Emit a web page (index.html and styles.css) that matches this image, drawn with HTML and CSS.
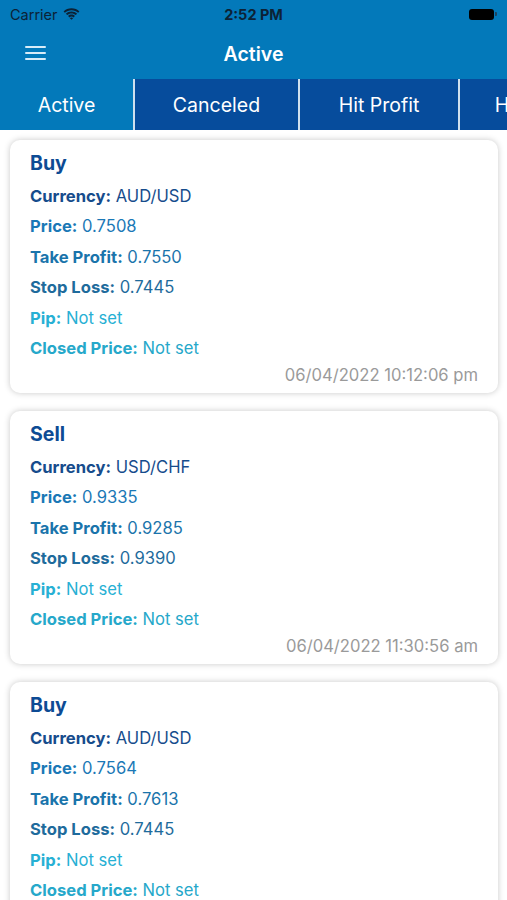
FILE: index.html
```html
<!DOCTYPE html>
<html>
<head>
<meta charset="utf-8">
<link rel="stylesheet" href="styles.css">
</head>
<body>
<div class="app">
  <header class="top">
    <div class="status">
      <div class="status-left">
        <span class="carrier">Carrier</span>
        <svg class="wifi" width="17" height="12" viewBox="0 0 17 12"><path d="M8.5 2.2c2.6 0 4.9 1 6.6 2.6l1.3-1.4C14.4 1.5 11.6.3 8.5.3S2.6 1.5.6 3.4l1.3 1.4C3.6 3.2 5.9 2.2 8.5 2.2z" fill="#0c2236"/><path d="M8.5 5.4c1.7 0 3.2.6 4.3 1.7l1.3-1.4C12.6 4.3 10.7 3.5 8.5 3.5S4.4 4.3 2.9 5.7l1.3 1.4C5.3 6 6.8 5.4 8.5 5.4z" fill="#0c2236"/><path d="M8.5 8.6c.8 0 1.5.3 2 .8l1.4-1.4c-.9-.9-2.1-1.4-3.4-1.4S6 7.1 5.1 8l1.4 1.4c.5-.5 1.2-.8 2-.8z" fill="#0c2236"/><path d="M8.5 11.8l1.6-1.6c-.4-.4-1-.7-1.6-.7s-1.2.3-1.6.7z" fill="#0c2236"/></svg>
      </div>
      <span class="time">2:52 PM</span>
      <div class="status-right">
        <span class="battery"></span><span class="battery-cap"></span>
      </div>
    </div>
    <div class="navbar">
      <svg class="menu" width="21" height="16" viewBox="0 0 21 16"><rect x="0" y="1" width="21" height="2" rx="1" fill="#d8ecf8"/><rect x="0" y="7" width="21" height="2" rx="1" fill="#d8ecf8"/><rect x="0" y="13" width="21" height="2" rx="1" fill="#d8ecf8"/></svg>
      <h1 class="title">Active</h1>
    </div>
  </header>
  <nav class="tabs">
    <div class="tab tab-active t1">Active</div>
    <div class="tab t2">Canceled</div>
    <div class="tab t3">Hit Profit</div>
    <div class="tab t4">Hit Loss</div>
  </nav>
  <main class="list">
    <section class="card">
      <h2 class="side">Buy</h2>
      <div class="rows">
        <p class="row r-cur"><b>Currency:</b> AUD/USD</p>
        <p class="row r-price"><b>Price:</b> 0.7508</p>
        <p class="row r-tp"><b>Take Profit:</b> 0.7550</p>
        <p class="row r-sl"><b>Stop Loss:</b> 0.7445</p>
        <p class="row r-pip"><b>Pip:</b> Not set</p>
        <p class="row r-closed"><b>Closed Price:</b> Not set</p>
      </div>
      <p class="date">06/04/2022 10:12:06 pm</p>
    </section>
    <section class="card">
      <h2 class="side">Sell</h2>
      <div class="rows">
        <p class="row r-cur"><b>Currency:</b> USD/CHF</p>
        <p class="row r-price"><b>Price:</b> 0.9335</p>
        <p class="row r-tp"><b>Take Profit:</b> 0.9285</p>
        <p class="row r-sl"><b>Stop Loss:</b> 0.9390</p>
        <p class="row r-pip"><b>Pip:</b> Not set</p>
        <p class="row r-closed"><b>Closed Price:</b> Not set</p>
      </div>
      <p class="date">06/04/2022 11:30:56 am</p>
    </section>
    <section class="card">
      <h2 class="side">Buy</h2>
      <div class="rows">
        <p class="row r-cur"><b>Currency:</b> AUD/USD</p>
        <p class="row r-price"><b>Price:</b> 0.7564</p>
        <p class="row r-tp"><b>Take Profit:</b> 0.7613</p>
        <p class="row r-sl"><b>Stop Loss:</b> 0.7445</p>
        <p class="row r-pip"><b>Pip:</b> Not set</p>
        <p class="row r-closed"><b>Closed Price:</b> Not set</p>
      </div>
      <p class="date">06/04/2022 09:15:40 pm</p>
    </section>
  </main>
</div>
</body>
</html>
```
FILE: styles.css
```css
* { box-sizing: border-box; }
html, body { margin: 0; padding: 0; }
body {
  width: 507px;
  height: 900px;
  overflow: hidden;
  background: #ffffff;
  font-family: Inter, "Liberation Sans", sans-serif;
}
.app { display: flex; flex-direction: column; }
.top { background: #0379ba; }
.status {
  height: 28px;
  display: flex;
  align-items: center;
  justify-content: space-between;
  padding: 0 10px;
}
.status-left { display: flex; align-items: center; gap: 5px; width: 120px; }
.carrier { font-size: 14.5px; color: #0c2236; }
.wifi { margin-top: -1px; }
.time { font-size: 14.5px; font-weight: 700; color: #0c2236; }
.status-right { width: 120px; display: flex; justify-content: flex-end; align-items: center; }
.battery {
  width: 25px; height: 11px; border-radius: 3px; background: #000;
  display: inline-block;
}
.battery-cap { width: 2px; height: 4px; background: #1e4460; border-radius: 0 1px 1px 0; margin-left: 1px; }
.navbar {
  height: 51px;
  display: flex;
  align-items: center;
  justify-content: center;
  position: relative;
}
.menu { position: absolute; left: 25px; top: 17px; }
.title { margin: 0; font-size: 19.5px; font-weight: 600; color: #ffffff; }
.tabs {
  height: 51px;
  display: flex;
  background: #064c9c;
  overflow: hidden;
  white-space: nowrap;
}
.tab {
  flex: none;
  display: flex;
  align-items: center;
  justify-content: center;
  color: #ffffff;
  font-size: 19.5px;
  border-right: 2px solid #cfe0ee;
}
.tab-active { background: #0379ba; }
.t1 { width: 135px; }
.t2 { width: 165px; }
.t3 { width: 160px; }
.t4 { width: 144px; border-right: none; }
.list {
  display: flex;
  flex-direction: column;
  gap: 18px;
  padding: 10px 10px 0 10px;
}
.card {
  background: #ffffff;
  border-radius: 10px;
  box-shadow: 0 0 6px rgba(0, 0, 0, 0.22);
  padding: 10px 20px 8px 20px;
  height: 253px;
  width: 488px;
}
.side {
  margin: 0;
  font-size: 19.5px;
  font-weight: 700;
  color: #0d4b94;
  line-height: 27px;
  height: 27px;
}
.rows { padding-top: 4px; }
.row {
  margin: 0;
  font-size: 16.6px;
  line-height: 30.4px;
}
.row b { font-weight: 700; }
.r-cur { color: #164c8c; }
.r-price { color: #1a78b6; }
.r-tp { color: #1a74ab; }
.r-sl { color: #1e6b9c; }
.r-pip { color: #27b0d4; }
.r-closed { color: #26a8ca; }
.date {
  margin: 0;
  text-align: right;
  font-size: 16.6px;
  color: #9a9a9a;
  line-height: 25px;
}
```
